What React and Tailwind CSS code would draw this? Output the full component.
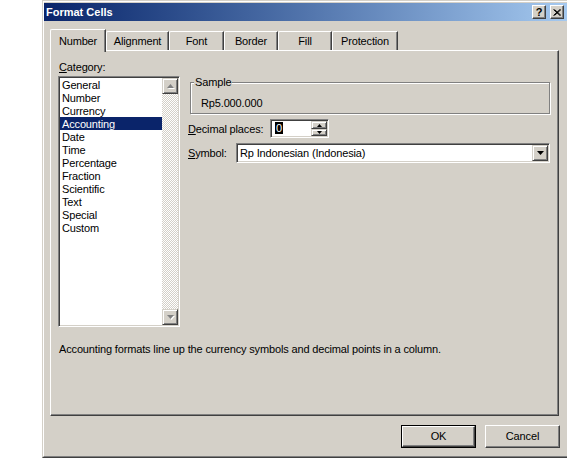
import React from "react";

const raised =
  "border border-t-white border-l-white border-r-[#404040] border-b-[#404040] shadow-[inset_-1px_-1px_0_#808080]";
const raisedSmall =
  "border border-t-[#d4d0c8] border-l-[#d4d0c8] border-r-[#404040] border-b-[#404040] shadow-[inset_1px_1px_0_#fff,inset_-1px_-1px_0_#808080]";
const sunken =
  "border border-t-[#808080] border-l-[#808080] border-r-white border-b-white shadow-[inset_1px_1px_0_#404040,inset_-1px_-1px_0_#d4d0c8] p-[1px]";

const categories = [
  "General",
  "Number",
  "Currency",
  "Accounting",
  "Date",
  "Time",
  "Percentage",
  "Fraction",
  "Scientific",
  "Text",
  "Special",
  "Custom",
];

const tabs = [
  { label: "Alignment", w: "w-[63px]" },
  { label: "Font", w: "w-[55px]" },
  { label: "Border", w: "w-[54px]" },
  { label: "Fill", w: "w-[54px]" },
  { label: "Protection", w: "w-[66px]" },
];

function Arrow({ up, color = "#000", size = 7 }) {
  const h = Math.ceil(size / 2);
  return (
    <svg width={size} height={h} viewBox={`0 0 ${size} ${h}`} className="block">
      {up ? (
        <polygon points={`${size / 2},0 ${size},${h} 0,${h}`} fill={color} />
      ) : (
        <polygon points={`0,0 ${size},0 ${size / 2},${h}`} fill={color} />
      )}
    </svg>
  );
}

function ScrollBtn({ up }) {
  return (
    <div className={`w-[16px] h-[16px] bg-[#d4d0c8] ${raisedSmall} flex items-center justify-center`}>
      <div className="relative">
        <div className="absolute left-[1px] top-[1px]">
          <Arrow up={up} color="#fff" />
        </div>
        <div className="relative">
          <Arrow up={up} color="#808080" />
        </div>
      </div>
    </div>
  );
}

export default function App() {
  return (
    <div className="w-[567px] h-[458px] bg-white overflow-hidden font-['Liberation_Sans',Arial,sans-serif] text-[11px] leading-[13px] tracking-[-0.15px] text-black">
      {/* dialog */}
      <div className="ml-[42px] w-[530px] h-[458px] border border-t-[#d4d0c8] border-l-[#d4d0c8] border-r-[#404040] border-b-[#404040]">
        <div className="h-full bg-[#d4d0c8] border border-t-white border-l-white border-r-[#808080] border-b-[#808080] pt-[1px]">
          {/* title bar */}
          <div className="h-[18px] w-[526px] flex items-center bg-gradient-to-r from-[#0a246a] to-[#a6caf0]">
            <span className="pl-[2px] font-bold text-white text-[11px] tracking-normal">Format Cells</span>
            <div className="ml-auto mr-[6px] flex gap-[4px]">
              <div className={`w-[14px] h-[14px] bg-[#d4d0c8] ${raised} flex items-center justify-center font-bold text-[11px] leading-none`}>
                ?
              </div>
              <div className={`w-[14px] h-[14px] bg-[#d4d0c8] ${raised} flex items-center justify-center`}>
                <svg width="8" height="7" viewBox="0 0 8 7">
                  <path d="M0.5 0.5 L7 6.5 M1.5 0.5 L8 6.5 M7 0.5 L0.5 6.5 M8 0.5 L1.5 6.5" stroke="#000" strokeWidth="1" />
                </svg>
              </div>
            </div>
          </div>

          {/* tab strip */}
          <div className="ml-[6px] mt-[8px] h-[21px] flex items-end">
            <div className="relative z-10 -mb-[2px] w-[56px] h-[23px] bg-[#d4d0c8] border-t border-l border-r border-t-white border-l-white border-r-[#404040] shadow-[inset_-1px_0_0_#808080] rounded-tl-[2px] flex justify-center pt-[5px]">
              Number
            </div>
            {tabs.map((t) => (
              <div
                key={t.label}
                className={`${t.w} h-[19px] border-t border-l border-r border-t-white border-l-white border-r-[#404040] shadow-[inset_-1px_0_0_#808080] rounded-tl-[2px] flex items-center justify-center pt-[1px]`}
              >
                {t.label}
              </div>
            ))}
          </div>

          {/* tab panel */}
          <div className="ml-[6px] w-[509px] h-[366px] border border-t-white border-l-white border-r-[#404040] border-b-[#404040] shadow-[inset_-1px_-1px_0_#808080]">
            <div className="flex">
              {/* category list */}
              <div className="ml-[7px] mt-[10px] flex flex-col">
                <div className="pl-[1px] h-[13px]">
                  <span className="underline">C</span>ategory:
                </div>
                <div className={`mt-[2px] w-[122px] h-[251px] bg-white flex ${sunken}`}>
                  <div className="flex-1 flex flex-col">
                    {categories.map((c) => (
                      <div
                        key={c}
                        className={`h-[13px] pl-[2px] pt-[1px] ${c === "Accounting" ? "bg-[#0a246a] text-white" : ""}`}
                      >
                        {c}
                      </div>
                    ))}
                  </div>
                  <div className="w-[16px] flex flex-col bg-[repeating-conic-gradient(#d4d0c8_0_25%,#fff_0_50%)] bg-[length:2px_2px]">
                    <ScrollBtn up />
                    <div className="flex-1" />
                    <ScrollBtn />
                  </div>
                </div>
              </div>

              {/* right column */}
              <div className="ml-[8px] w-[362px] flex flex-col pt-[31px]">
                <div className="relative ml-[2px] h-[32px] w-[360px] border border-[#808080] shadow-[inset_1px_1px_0_#fff,1px_1px_0_#fff] pl-[10px] pt-[14px]">
                  <span className="absolute left-[3px] -top-[7px] px-[1px] bg-[#d4d0c8]">Sample</span>
                  Rp5.000.000
                </div>

                <div className="mt-[5px] h-[19px] flex items-center">
                  <div className="w-[82px] pt-[1px]">
                    <span className="underline">D</span>ecimal places:
                  </div>
                  <div className={`w-[59px] h-[19px] bg-white flex ${sunken}`}>
                    <div className="flex-1 pl-[3px] pt-[1px]">
                      <span className="bg-black text-white px-[1px]">0</span>
                    </div>
                    <div className="w-[16px] flex flex-col">
                      <div className={`h-[8px] bg-[#d4d0c8] ${raisedSmall} flex items-center justify-center`}>
                        <Arrow up size={5} />
                      </div>
                      <div className={`h-[7px] bg-[#d4d0c8] ${raisedSmall} flex items-center justify-center`}>
                        <Arrow size={5} />
                      </div>
                    </div>
                  </div>
                </div>

                <div className="mt-[5px] h-[20px] flex items-center">
                  <div className="w-[48px] pt-[1px]">
                    <span className="underline">S</span>ymbol:
                  </div>
                  <div className={`w-[314px] h-[20px] bg-white flex items-center ${sunken}`}>
                    <div className="flex-1 pl-[2px] pt-[1px]">Rp Indonesian (Indonesia)</div>
                    <div className={`w-[16px] h-[16px] bg-[#d4d0c8] ${raisedSmall} flex items-center justify-center`}>
                      <Arrow />
                    </div>
                  </div>
                </div>
              </div>
            </div>

            <div className="ml-[8px] mt-[16px]">
              Accounting formats line up the currency symbols and decimal points in a column.
            </div>
          </div>

          {/* buttons */}
          <div className="ml-[357px] mt-[9px] flex gap-[9px]">
            <div className="w-[75px] h-[23px] border border-black">
              <div className={`h-full bg-[#d4d0c8] ${raised} flex items-center justify-center`}>OK</div>
            </div>
            <div className={`w-[75px] h-[23px] bg-[#d4d0c8] ${raised} flex items-center justify-center`}>
              Cancel
            </div>
          </div>
        </div>
      </div>
    </div>
  );
}
